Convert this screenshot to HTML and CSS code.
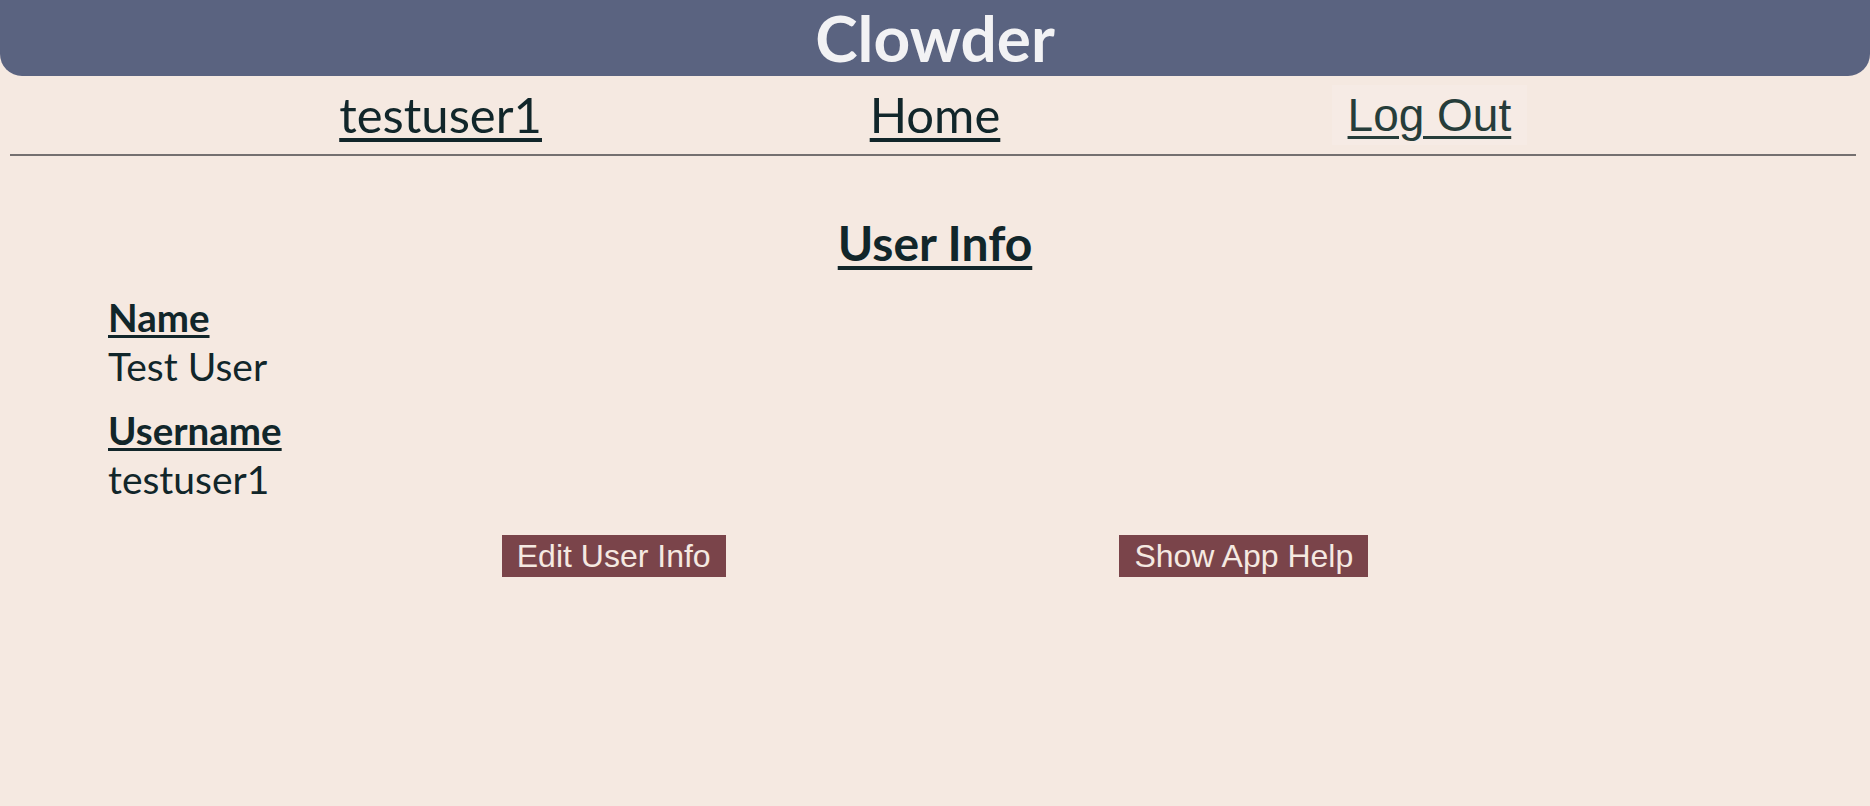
FILE: index.html
```html
<!DOCTYPE html>
<html lang="en">
<head>
<meta charset="utf-8">
<title>Clowder</title>
<link rel="stylesheet" href="styles.css">
</head>
<body>
<header class="app-header">
  <h1 class="app-title">Clowder</h1>
</header>
<div class="page">
  <nav class="top-nav">
    <div class="nav-cell"><a class="nav-link" href="#">testuser1</a></div>
    <div class="nav-cell"><a class="nav-link" href="#">Home</a></div>
    <div class="nav-cell"><button class="logout-btn" type="button">Log Out</button></div>
  </nav>
  <hr class="divider">
  <main class="user-info">
    <h2 class="section-title">User Info</h2>
    <div class="field">
      <div class="field-label">Name</div>
      <div class="field-value">Test User</div>
    </div>
    <div class="field">
      <div class="field-label">Username</div>
      <div class="field-value">testuser1</div>
    </div>
    <div class="actions">
      <button class="action-btn" type="button">Edit User Info</button>
      <button class="action-btn" type="button">Show App Help</button>
    </div>
  </main>
</div>
</body>
</html>
```
FILE: styles.css
```css
html, body {
  margin: 0;
  padding: 0;
}
body {
  background: #f5e9e1;
  color: #11262a;
  font-family: "Lato", "Liberation Sans", sans-serif;
  min-height: 806px;
}
.app-header {
  background: #5a6380;
  height: 76px;
  border-radius: 0 0 22px 22px;
  display: flex;
  justify-content: center;
  align-items: flex-start;
}
.app-title {
  margin: 0;
  font-family: "Lato", sans-serif;
  font-weight: 700;
  font-size: 64px;
  line-height: 76px;
  color: #f2f2f4;
}
.page {
  padding: 0 8px;
}
.top-nav {
  width: 80%;
  margin: 9px auto 0;
  display: grid;
  grid-template-columns: 1fr 1fr 1fr;
  height: 60px;
  align-items: start;
}
.nav-cell {
  display: flex;
  justify-content: center;
}
.nav-link {
  font-family: "Lato", sans-serif;
  font-size: 49px;
  line-height: 58px;
  color: #11262a;
  text-decoration: underline;
  text-decoration-thickness: 4px;
  text-underline-offset: 5px;
}
.logout-btn {
  font-family: "Liberation Sans", Arial, sans-serif;
  font-size: 46px;
  line-height: 56px;
  color: #263d3a;
  background: #f6ebe5;
  border: none;
  padding: 2px 16px;
  text-decoration: underline;
  text-decoration-thickness: 3px;
  text-underline-offset: 5px;
  cursor: pointer;
}
.divider {
  border: none;
  border-top: 2px solid #747070;
  margin: 9px 6px 0 2px;
  height: 0;
}
.user-info {
  padding: 0 100px;
}
.section-title {
  margin: 58px 0 0;
  text-align: center;
  font-family: "Lato", sans-serif;
  font-weight: 700;
  font-size: 48px;
  line-height: 58px;
  text-decoration: underline;
  text-decoration-thickness: 4px;
  text-underline-offset: 5px;
}
.field {
  margin-top: 21px;
}
.field + .field {
  margin-top: 16px;
}
.field-label {
  font-weight: 700;
  font-size: 38.5px;
  line-height: 48px;
  text-decoration: underline;
  text-decoration-thickness: 3px;
  text-underline-offset: 3px;
}
.field-value {
  font-size: 39px;
  line-height: 48px;
  margin-top: 1px;
}
.actions {
  display: flex;
  justify-content: space-evenly;
  margin-top: 32px;
}
.action-btn {
  font-family: "Liberation Sans", Arial, sans-serif;
  font-size: 32px;
  line-height: 42px;
  height: 42px;
  padding: 0 15px;
  border: none;
  background: #7a444a;
  color: #f5e9e1;
  cursor: pointer;
}
```
